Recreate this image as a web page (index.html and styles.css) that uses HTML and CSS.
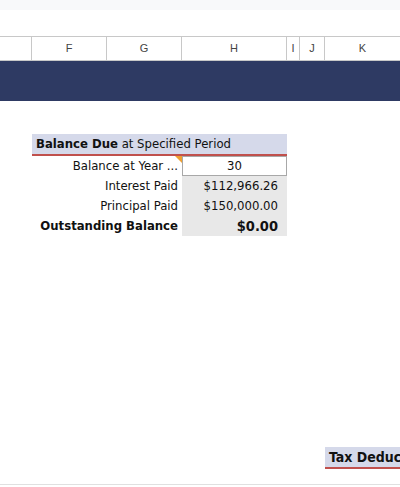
FILE: index.html
```html
<!DOCTYPE html>
<html lang="en">
<head>
    <meta charset="UTF-8">
    <title>Loan Sheet</title>
    <link rel="stylesheet" href="styles.css">
</head>
<body>
    <div class="toolbar"></div>
    <div class="formula-bar"></div>
    <div class="col-heads">
        <div class="col-head"></div>
        <div class="col-head">F</div>
        <div class="col-head">G</div>
        <div class="col-head">H</div>
        <div class="col-head">I</div>
        <div class="col-head">J</div>
        <div class="col-head">K</div>
    </div>
    <div class="banner"></div>
    <div class="sheet">
        <div class="section-title"><b>Balance Due</b> at Specified Period</div>

        <div class="label note">Balance at Year ...</div>
        <div class="input">30</div>

        <div class="label">Interest Paid</div>
        <div class="value">$112,966.26</div>

        <div class="label">Principal Paid</div>
        <div class="value">$150,000.00</div>

        <div class="label strong">Outstanding Balance</div>
        <div class="value total">$0.00</div>
    </div>
    <div class="sheet lower">
        <div class="section-title col-k"><b>Tax Deductions</b></div>
    </div>
    <div class="sheet-end"></div>
</body>
</html>
```

FILE: styles.css
```css
body { margin: 0; padding: 0; font-family: "DejaVu Sans Condensed", "DejaVu Sans", Tahoma, sans-serif; font-size: 13px; color: #111; background: white; width: 400px; height: 487px; overflow: hidden; }

.toolbar { height: 10px; background: #f8f9fa; }
.formula-bar { height: 26px; background: white; }

.col-heads { display: grid; grid-template-columns: 32px 75px 75px 105px 13px 25px 75px; height: 23px; border-top: 1px solid #c8c8c8; border-bottom: 1px solid #c8c8c8; }
.col-head { font-family: "Liberation Sans", Arial, sans-serif; font-size: 11px; color: #444; text-align: center; line-height: 23px; border-right: 1px solid #c8c8c8; }
.col-head:last-child { border-right: none; }

.banner { height: 40px; background: #2e3a63; }

.sheet { display: grid; grid-template-columns: 32px 75px 75px 105px 13px 25px 75px; grid-template-rows: 22px; grid-auto-rows: 20px; padding-top: 33px; }
.sheet.lower { padding-top: 211px; }

.section-title { grid-column: 2 / 5; background: #d5d9ea; border-bottom: 2px solid #c0504d; line-height: 20px; padding-left: 4px; white-space: nowrap; overflow: hidden; }
.section-title.col-k { grid-column: 7 / 8; font-size: 14px; }

.label { grid-column: 2 / 4; text-align: right; padding-right: 4px; line-height: 20px; white-space: nowrap; position: relative; }
.label.note::after { content: ""; position: absolute; top: 0; right: 0; border-top: 7px solid #f0a030; border-left: 7px solid transparent; }
.label.strong { font-weight: bold; }

.input { grid-column: 4 / 5; border: 1px solid #a8a8a8; background: white; text-align: center; line-height: 18px; }
.value { grid-column: 4 / 5; background: #e8e8e8; text-align: right; padding-right: 9px; line-height: 20px; }
.value.total { font-weight: bold; font-size: 14.5px; }

.sheet-end { position: absolute; top: 484px; left: 0; width: 400px; border-top: 1px solid #e0e0e0; }
```
